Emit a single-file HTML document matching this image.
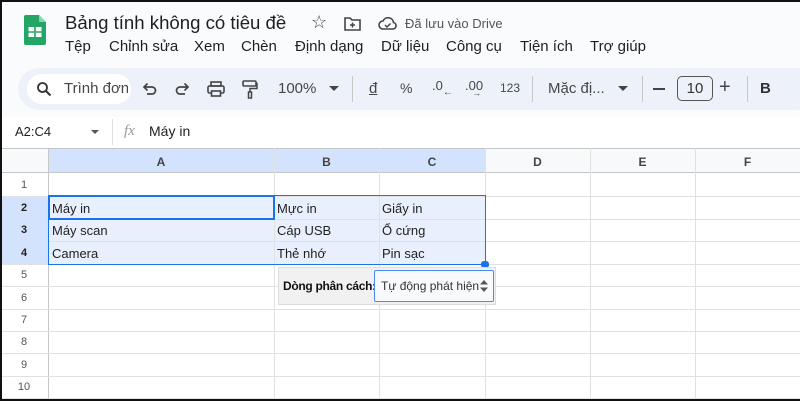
<!DOCTYPE html>
<html><head><meta charset="utf-8"><style>
*{margin:0;padding:0;box-sizing:border-box}
body{width:800px;height:401px;overflow:hidden;background:#f9fbfd;font-family:"Liberation Sans",Arial,sans-serif;position:relative;color:#1f1f1f}
.a{position:absolute;white-space:nowrap}
.frame{position:absolute;left:0;top:0;width:800px;height:401px;border:2px solid #111;border-right:none;pointer-events:none;z-index:50}
.m{font-size:15px;top:38px;color:#1f1f1f}
.tb{font-size:15px;color:#444746}
.grid{position:absolute;left:0;top:148px;width:800px;height:253px;background:#fff}
.ch{font-size:12px;font-weight:bold;color:#444;text-align:center;top:155px}
.rh{font-size:11px;font-weight:bold;color:#555;width:48px;text-align:center}
.cell{font-size:13px;color:#222}
</style></head><body>
<svg class="a" style="left:24px;top:15px" width="22" height="30" viewBox="0 0 22 30"><path d="M2 0h13l7 7v21a2 2 0 0 1-2 2H2a2 2 0 0 1-2-2V2a2 2 0 0 1 2-2z" fill="#23a566"/><path d="M15 0v7h7z" fill="#8ed1b1"/><rect x="4.5" y="12" width="13" height="10" fill="#fff"/><path d="M4.5 17h13M11 12v10" stroke="#23a566" stroke-width="1.6"/></svg>
<div class="a" style="left:65px;top:12px;font-size:18.6px;color:#1f1f1f">Bảng tính không có tiêu đề</div>
<div class="a" style="left:311px;top:12px;font-size:18px;color:#444">☆</div>
<svg class="a" style="left:344px;top:17px" width="17" height="14" viewBox="0 0 17 14"><path d="M1 1h5l2 2h8v10H1z" fill="none" stroke="#444" stroke-width="1.6"/><path d="M8.5 5.5v5M6 8h5" stroke="#444" stroke-width="1.5"/></svg>
<svg class="a" style="left:378px;top:17px" width="19" height="13" viewBox="0 0 19 13"><path d="M5 12a4 4 0 0 1 0-8 5.5 5.5 0 0 1 10.5 1.5A3.3 3.3 0 0 1 15 12z" fill="none" stroke="#444" stroke-width="1.6"/><path d="M7 8l2 2 3.5-3.5" fill="none" stroke="#444" stroke-width="1.5"/></svg>
<div class="a" style="left:405px;top:16px;font-size:13px;color:#555">Đã lưu vào Drive</div>
<div class="a m" style="left:65px">Tệp</div>
<div class="a m" style="left:109px">Chỉnh sửa</div>
<div class="a m" style="left:194px">Xem</div>
<div class="a m" style="left:241px">Chèn</div>
<div class="a m" style="left:295px">Định dạng</div>
<div class="a m" style="left:381px">Dữ liệu</div>
<div class="a m" style="left:446px">Công cụ</div>
<div class="a m" style="left:520px">Tiện ích</div>
<div class="a m" style="left:590px">Trợ giúp</div>
<div class="a" style="left:18px;top:68px;width:800px;height:42px;background:#edf2fa;border-radius:21px"></div>
<div class="a" style="left:27px;top:74px;width:104px;height:30px;background:#fff;border-radius:15px"></div>
<svg class="a" style="left:36px;top:81px" width="16" height="16" viewBox="0 0 16 16"><circle cx="6.5" cy="6.5" r="4.5" fill="none" stroke="#333" stroke-width="1.8"/><path d="M10 10l4.5 4.5" stroke="#333" stroke-width="2"/></svg>
<div class="a tb" style="left:64px;top:80px;width:64px;overflow:hidden">Trình đơn</div>
<svg class="a" style="left:142px;top:82px" width="15" height="14" viewBox="0 0 15 14"><path d="M3 5h7a3.5 3.5 0 0 1 0 7H5" fill="none" stroke="#444" stroke-width="1.7"/><path d="M5.5 1.5L2 5l3.5 3.5" fill="none" stroke="#444" stroke-width="1.7"/></svg>
<svg class="a" style="left:175px;top:82px" width="15" height="14" viewBox="0 0 15 14"><path d="M12 5H5a3.5 3.5 0 0 0 0 7h5" fill="none" stroke="#444" stroke-width="1.7"/><path d="M9.5 1.5L13 5l-3.5 3.5" fill="none" stroke="#444" stroke-width="1.7"/></svg>
<svg class="a" style="left:207px;top:81px" width="18" height="16" viewBox="0 0 18 16"><rect x="4" y="1" width="10" height="4" fill="none" stroke="#444" stroke-width="1.6"/><rect x="1" y="5" width="16" height="7" rx="1.5" fill="none" stroke="#444" stroke-width="1.6"/><rect x="4.5" y="10" width="9" height="5" fill="#edf2fa" stroke="#444" stroke-width="1.6"/></svg>
<svg class="a" style="left:242px;top:80px" width="16" height="19" viewBox="0 0 16 19"><rect x="1" y="1" width="13" height="5" rx="1" fill="none" stroke="#444" stroke-width="1.6"/><path d="M14 3.5h1v5H8v4" fill="none" stroke="#444" stroke-width="1.5"/><rect x="6.5" y="12" width="3" height="6" fill="none" stroke="#444" stroke-width="1.5"/></svg>
<div class="a tb" style="left:278px;top:80px">100%</div>
<div class="a" style="left:329px;top:86px;border:5px solid transparent;border-top:5px solid #444"></div>
<div class="a" style="left:352px;top:76px;width:1px;height:26px;background:#c7c7c7"></div>
<div class="a tb" style="left:369px;top:80px;text-decoration:underline">đ</div>
<div class="a tb" style="left:400px;top:80px;font-size:14px">%</div>
<div class="a tb" style="left:432px;top:78px;font-size:13px">.0<span style="font-size:10px;vertical-align:-5px">←</span></div>
<div class="a tb" style="left:465px;top:78px;font-size:13px">.00<span style="font-size:9px;position:relative;left:-11px;top:6px">→</span></div>
<div class="a tb" style="left:500px;top:81px;font-size:12px">123</div>
<div class="a" style="left:532px;top:76px;width:1px;height:26px;background:#c7c7c7"></div>
<div class="a tb" style="left:548px;top:80px">Mặc đị...</div>
<div class="a" style="left:618px;top:86px;border:5px solid transparent;border-top:5px solid #444"></div>
<div class="a" style="left:642px;top:76px;width:1px;height:26px;background:#c7c7c7"></div>
<div class="a" style="left:653px;top:88px;width:12px;height:2px;background:#444"></div>
<div class="a" style="left:677px;top:76px;width:36px;height:25px;border:1px solid #555;border-radius:5px;text-align:center;font-size:15px;line-height:23px;color:#333">10</div>
<div class="a tb" style="left:719px;top:76px;font-size:20px">+</div>
<div class="a" style="left:747px;top:76px;width:1px;height:26px;background:#c7c7c7"></div>
<div class="a tb" style="left:760px;top:80px;font-weight:bold;color:#333">B</div>
<div class="a" style="left:0;top:117px;width:800px;height:31px;background:#fff"></div>
<div class="a" style="left:15px;top:124px;font-size:13px">A2:C4</div>
<div class="a" style="left:91px;top:130px;border:4px solid transparent;border-top:4px solid #555"></div>
<div class="a" style="left:112px;top:119px;width:1px;height:26px;background:#e0e0e0"></div>
<div class="a" style="left:124px;top:123px;font-size:15px;font-style:italic;color:#999;font-family:'Liberation Serif',serif">fx</div>
<div class="a" style="left:149px;top:123px;font-size:14px">Máy in</div>
<div class="grid"></div>
<div class="a" style="left:0;top:148px;width:800px;height:25px;background:#f8f9fa;border-top:1px solid #c4c7c5;border-bottom:1px solid #c4c7c5"></div>
<div class="a" style="left:48px;top:148px;width:437px;height:25px;background:#d3e3fd;border-top:1px solid #c4c7c5;border-bottom:1px solid #c4c7c5"></div>
<div class="a" style="left:0;top:196px;width:48px;height:68px;background:#d3e3fd"></div>
<div class="a" style="left:48px;top:196px;width:437px;height:68px;background:#e8f0fe"></div>
<div class="a" style="left:48px;top:148px;width:1px;height:253px;background:#c4c7c5"></div>
<div class="a" style="left:274px;top:148px;width:1px;height:253px;background:#e1e1e1"></div>
<div class="a" style="left:379px;top:148px;width:1px;height:253px;background:#e1e1e1"></div>
<div class="a" style="left:485px;top:148px;width:1px;height:253px;background:#e1e1e1"></div>
<div class="a" style="left:590px;top:148px;width:1px;height:253px;background:#e1e1e1"></div>
<div class="a" style="left:695px;top:148px;width:1px;height:253px;background:#e1e1e1"></div>
<div class="a ch" style="left:48px;width:226px">A</div>
<div class="a ch" style="left:274px;width:105px">B</div>
<div class="a ch" style="left:379px;width:106px">C</div>
<div class="a ch" style="left:485px;width:105px">D</div>
<div class="a ch" style="left:590px;width:105px">E</div>
<div class="a ch" style="left:695px;width:105px">F</div>
<div class="a" style="left:0;top:196px;width:800px;height:1px;background:#e1e1e1"></div>
<div class="a" style="left:0;top:219px;width:800px;height:1px;background:#e1e1e1"></div>
<div class="a" style="left:0;top:241px;width:800px;height:1px;background:#e1e1e1"></div>
<div class="a" style="left:0;top:264px;width:800px;height:1px;background:#e1e1e1"></div>
<div class="a" style="left:0;top:286px;width:800px;height:1px;background:#e1e1e1"></div>
<div class="a" style="left:0;top:309px;width:800px;height:1px;background:#e1e1e1"></div>
<div class="a" style="left:0;top:331px;width:800px;height:1px;background:#e1e1e1"></div>
<div class="a" style="left:0;top:353px;width:800px;height:1px;background:#e1e1e1"></div>
<div class="a" style="left:0;top:376px;width:800px;height:1px;background:#e1e1e1"></div>
<div class="a" style="left:0;top:398px;width:800px;height:1px;background:#e1e1e1"></div>
<div class="a rh" style="left:0;top:179px;font-weight:normal">1</div>
<div class="a rh" style="left:0;top:202px;color:#222">2</div>
<div class="a rh" style="left:0;top:224px;color:#222">3</div>
<div class="a rh" style="left:0;top:247px;color:#222">4</div>
<div class="a rh" style="left:0;top:269px;font-weight:normal">5</div>
<div class="a rh" style="left:0;top:292px;font-weight:normal">6</div>
<div class="a rh" style="left:0;top:314px;font-weight:normal">7</div>
<div class="a rh" style="left:0;top:336px;font-weight:normal">8</div>
<div class="a rh" style="left:0;top:359px;font-weight:normal">9</div>
<div class="a rh" style="left:0;top:381px;font-weight:normal">10</div>
<div class="a" style="left:48px;top:195px;width:438px;height:70px;border:1px solid #1a73e8"></div>
<div class="a" style="left:48px;top:195px;width:227px;height:25px;border:2px solid #1a73e8"></div>
<div class="a" style="left:481px;top:261px;width:8px;height:7px;background:#1a73e8;border-radius:3px"></div>
<div class="a cell" style="left:52px;top:201px">Máy in</div>
<div class="a cell" style="left:52px;top:223px">Máy scan</div>
<div class="a cell" style="left:52px;top:246px">Camera</div>
<div class="a cell" style="left:277px;top:201px">Mực in</div>
<div class="a cell" style="left:277px;top:223px">Cáp USB</div>
<div class="a cell" style="left:277px;top:246px">Thẻ nhớ</div>
<div class="a cell" style="left:382px;top:201px">Giấy in</div>
<div class="a cell" style="left:382px;top:223px">Ổ cứng</div>
<div class="a cell" style="left:382px;top:246px">Pin sạc</div>
<div class="a" style="left:278px;top:267px;width:218px;height:38px;background:#f1f1f1;border:1px solid #ddd"></div>
<div class="a" style="left:283px;top:279px;font-size:12px;color:#111;font-weight:bold;letter-spacing:-0.3px">Dòng phân cách:</div>
<div class="a" style="left:374px;top:270px;width:120px;height:32px;background:#f8f9fa;border:1px solid #4a8af4;border-radius:2px"></div>
<div class="a" style="left:381px;top:279px;font-size:12px;color:#333">Tự động phát hiện</div>
<svg class="a" style="left:480px;top:280px" width="8" height="12" viewBox="0 0 8 12"><path d="M4 0L8 4.5H0zM4 12L0 7.5h8z" fill="#555"/></svg>
<div class="frame"></div>
</body></html>
